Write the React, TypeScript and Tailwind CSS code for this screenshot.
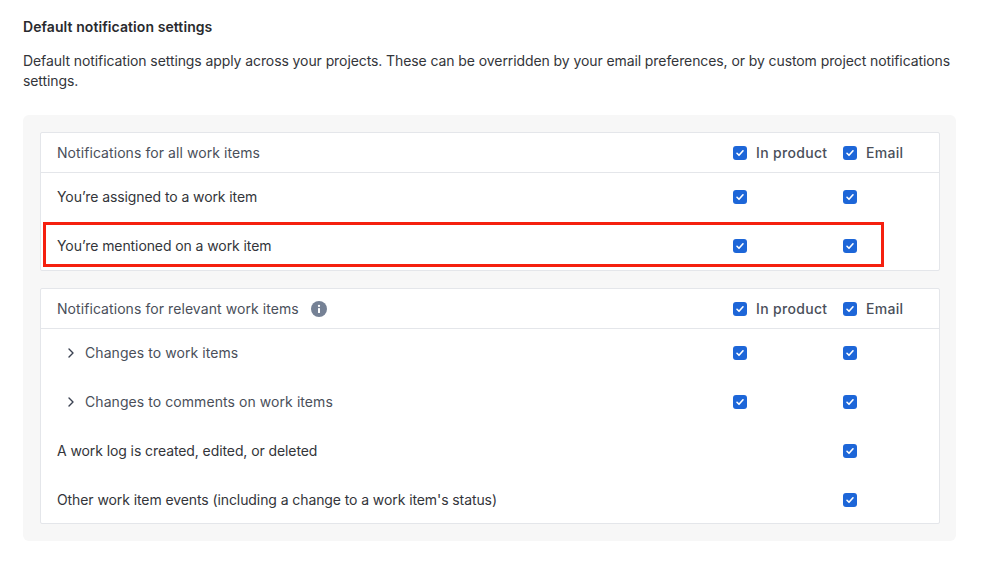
import React from "react";

const Check = () => (
  <span className="w-[14px] h-[14px] rounded-[3px] bg-[#1d66d8] flex items-center justify-center shrink-0">
    <svg width="10" height="10" viewBox="0 0 10 10" fill="none">
      <path d="M2 5.3 L4 7.3 L8 2.8" stroke="#fff" strokeWidth="1.6" strokeLinecap="round" strokeLinejoin="round" />
    </svg>
  </span>
);

const Chevron = () => (
  <svg width="10" height="12" viewBox="0 0 10 12" fill="none" className="shrink-0">
    <path d="M3 2 L7 6 L3 10" stroke="#3b4252" strokeWidth="1.4" strokeLinecap="round" strokeLinejoin="round" />
  </svg>
);

const Info = () => (
  <svg width="16" height="16" viewBox="0 0 16 16" className="shrink-0">
    <circle cx="8" cy="8" r="8" fill="#758195" />
    <rect x="7" y="7" width="2" height="5" rx="0.6" fill="#fff" />
    <circle cx="8" cy="4.9" r="1.15" fill="#fff" />
  </svg>
);

function Header({ label, info }: { label: string; info?: boolean }) {
  return (
    <div className="flex items-center h-[40px] border-b border-[#e4e6ea] pl-4 text-[#4a4f5a]">
      <div className="flex-1 flex items-center gap-[12px] text-[14px] tracking-[0.07px]">
        {label}
        {info && <Info />}
      </div>
      <div className="w-[110px] pl-px flex items-center gap-[9px] text-[14px] font-medium tracking-[0.33px]">
        <Check />
        <span>In product</span>
      </div>
      <div className="w-[97px] pl-px flex items-center gap-[9px] text-[14px] font-medium tracking-[0.3px]">
        <Check />
        <span>Email</span>
      </div>
    </div>
  );
}

function Row({ label, product = true, nested }: { label: string; product?: boolean; nested?: boolean }) {
  return (
    <div className={nested ? "flex items-center h-[49px] pb-[2px] pl-4 text-[14px] tracking-[0.07px]" : "flex items-center h-[49px] pb-[2px] pl-4 text-[14px] tracking-[-0.09px]"}>
      <div className={nested ? "flex-1 flex items-center gap-[9px] pl-[9px] text-[#4a4f5a]" : "flex-1 text-[#33353a]"}>
        {nested && <Chevron />}
        {label}
      </div>
      <div className="w-[110px] pl-px">{product && <Check />}</div>
      <div className="w-[97px] pl-px">
        <Check />
      </div>
    </div>
  );
}

export default function App() {
  return (
    <div className="w-[999px] h-[563px] bg-white overflow-hidden relative font-['Inter',sans-serif] px-[23px] pt-[18px]">
      <h2 className="text-[14px] leading-[18px] font-semibold text-[#292a2e] tracking-[0.08px]">
        Default notification settings
      </h2>
      <p className="mt-[15px] w-[945px] text-[14px] leading-[20px] text-[#33353a] tracking-[-0.09px]">
        Default notification settings apply across your projects. These can be overridden by your email preferences, or by custom project notifications settings.
      </p>
      <div className="mt-[24px] w-[933px] h-[426px] bg-[#f7f7f7] rounded-[6px] p-[17px] flex flex-col gap-[17px]">
        <div className="w-[900px] h-[139px] bg-white border border-[#e4e6ea] rounded-[2px]">
          <Header label="Notifications for all work items" />
          <Row label="You’re assigned to a work item" />
          <Row label="You’re mentioned on a work item" />
        </div>
        <div className="w-[900px] h-[236px] bg-white border border-[#e4e6ea] rounded-[2px]">
          <Header label="Notifications for relevant work items" info />
          <Row nested label="Changes to work items" />
          <Row nested label="Changes to comments on work items" />
          <Row product={false} label="A work log is created, edited, or deleted" />
          <Row product={false} label="Other work item events (including a change to a work item's status)" />
        </div>
      </div>
      <div className="absolute left-[43px] top-[222px] w-[841px] h-[45px] border-[3px] border-[#f5200f]" />
    </div>
  );
}
